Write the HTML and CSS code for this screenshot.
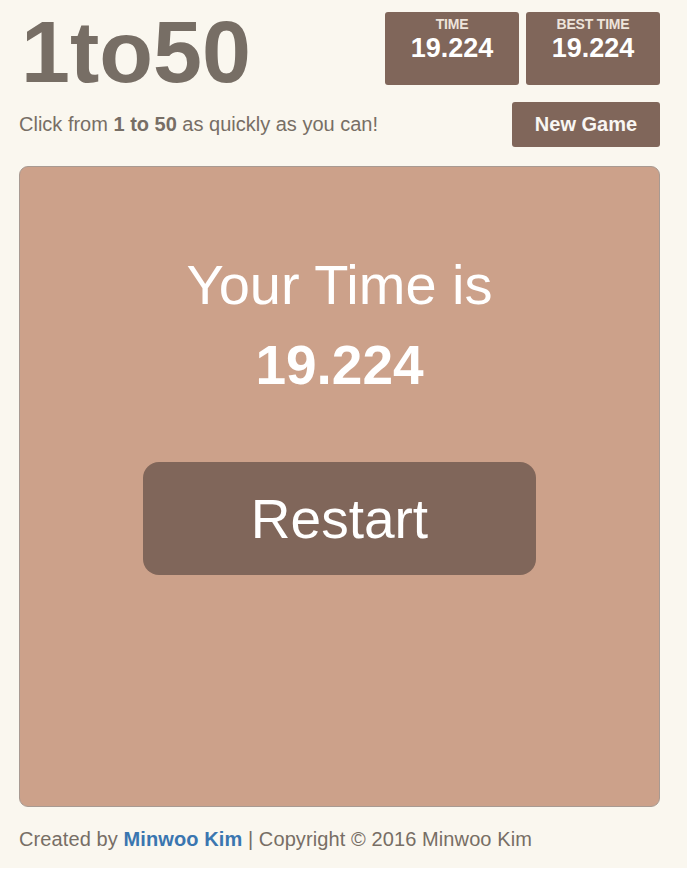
FILE: index.html
```html
<!DOCTYPE html>
<html>
<head>
<meta charset="utf-8">
<link rel="stylesheet" href="styles.css">
</head>
<body>
<div class="page">
  <header class="heading">
    <h1 class="title">1to50</h1>
    <div class="scores">
      <div class="score-box"><div class="score-label">TIME</div><div class="score-value">19.224</div></div>
      <div class="score-box"><div class="score-label">BEST TIME</div><div class="score-value">19.224</div></div>
    </div>
  </header>
  <div class="intro">
    <p class="intro-text">Click from <strong>1 to 50</strong> as quickly as you can!</p>
    <a class="new-game">New Game</a>
  </div>
  <div class="board">
    <div class="result-title">Your Time is</div>
    <div class="result-time">19.224</div>
    <a class="restart">Restart</a>
  </div>
  <footer class="footer">Created by <a class="author">Minwoo Kim</a> | Copyright © 2016 Minwoo Kim</footer>
</div>
</body>
</html>
```
FILE: styles.css
```css
html, body {
  margin: 0;
  padding: 0;
  background: #ffffff;
}
.page {
  background: #faf7ef;
  font-family: "Liberation Sans", Arial, sans-serif;
  color: #776e65;
  padding: 12px 27px 0 19px;
  height: 856px;
}
.heading {
  display: flex;
  justify-content: space-between;
  align-items: flex-start;
}
.title {
  margin: 0;
  font-size: 88px;
  font-weight: bold;
  line-height: 80px;
  padding-left: 2px;
  color: #776e65;
}
.scores {
  display: flex;
  gap: 7px;
}
.score-box {
  width: 134px;
  height: 73px;
  background: #80665a;
  border-radius: 3px;
  text-align: center;
  box-sizing: border-box;
  padding-top: 4px;
}
.score-label {
  font-size: 14px;
  font-weight: bold;
  line-height: 17px;
  color: #eee4da;
  letter-spacing: -0.2px;
}
.score-value {
  font-size: 27px;
  font-weight: bold;
  line-height: 31px;
  color: #ffffff;
}
.intro {
  display: flex;
  justify-content: space-between;
  align-items: center;
  margin-top: 10px;
}
.intro-text {
  margin: 0;
  font-size: 20px;
}
.intro-text strong {
  color: #776e65;
}
.new-game {
  width: 148px;
  height: 45px;
  background: #80665a;
  border-radius: 3px;
  color: #f9f6f2;
  font-weight: bold;
  font-size: 20px;
  display: flex;
  align-items: center;
  justify-content: center;
}
.board {
  margin-top: 19px;
  width: 641px;
  height: 641px;
  box-sizing: border-box;
  background: #cca18a;
  border: 1px solid #a89a92;
  border-radius: 9px;
  display: flex;
  flex-direction: column;
  align-items: center;
  color: #ffffff;
}
.result-title {
  margin-top: 86px;
  font-size: 56px;
  line-height: 64px;
}
.result-time {
  margin-top: 16px;
  font-size: 55px;
  font-weight: bold;
  line-height: 64px;
}
.restart {
  margin-top: 65px;
  width: 393px;
  height: 113px;
  background: #80665a;
  border-radius: 16px;
  font-size: 55px;
  display: flex;
  align-items: center;
  justify-content: center;
  color: #ffffff;
}
.footer {
  margin-top: 21px;
  font-size: 20px;
  letter-spacing: 0.1px;
}
.author {
  color: #3a76b0;
  font-weight: bold;
}
```
